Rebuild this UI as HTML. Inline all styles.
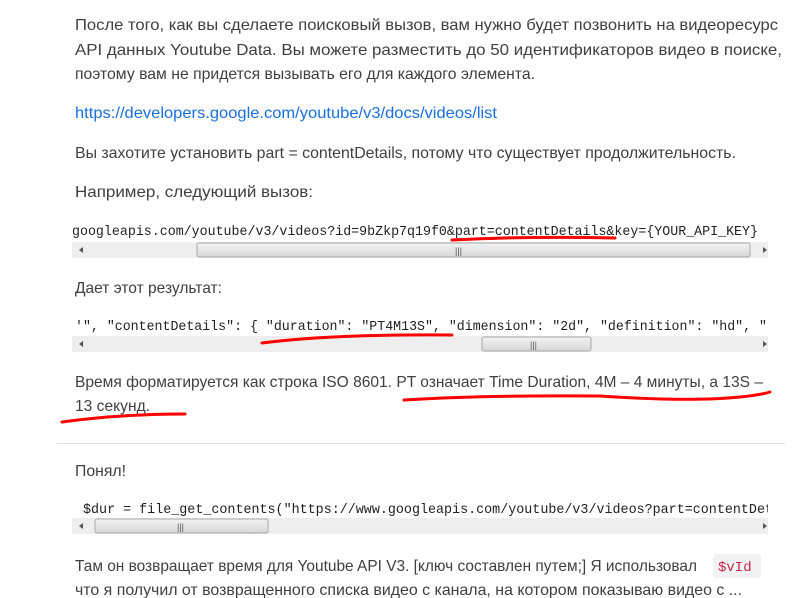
<!DOCTYPE html>
<html><head><meta charset="utf-8"><style>
html,body{margin:0;padding:0;background:#fff;width:808px;height:598px;overflow:hidden}
svg text{font-family:"Liberation Sans","DejaVu Sans",sans-serif;font-size:16px;fill:#404040}
svg text.m{font-family:"Liberation Mono","DejaVu Sans Mono",monospace;font-size:14px;fill:#222}
</style></head><body>
<svg width="808" height="598" xmlns="http://www.w3.org/2000/svg">
<defs>
<linearGradient id="th" x1="0" y1="0" x2="0" y2="1"><stop offset="0" stop-color="#f4f4f4"/><stop offset="1" stop-color="#d6d6d6"/></linearGradient>
</defs>
<text x="75" y="30" textLength="703" lengthAdjust="spacingAndGlyphs">После того, как вы сделаете поисковый вызов, вам нужно будет позвонить на видеоресурс</text>
<text x="75" y="55" textLength="707" lengthAdjust="spacingAndGlyphs">API данных Youtube Data. Вы можете разместить до 50 идентификаторов видео в поиске,</text>
<text x="75" y="79" textLength="460" lengthAdjust="spacingAndGlyphs">поэтому вам не придется вызывать его для каждого элемента.</text>
<text x="75" y="118" textLength="422" lengthAdjust="spacingAndGlyphs" style="fill:#1a6fe0">https://developers.google.com/youtube/v3/docs/videos/list</text>
<text x="75" y="158" textLength="661" lengthAdjust="spacingAndGlyphs">Вы захотите установить part = contentDetails, потому что существует продолжительность.</text>
<text x="75" y="197" textLength="238" lengthAdjust="spacingAndGlyphs">Например, следующий вызов:</text>

<text class="m" x="72" y="235" textLength="686" lengthAdjust="spacingAndGlyphs">googleapis.com/youtube/v3/videos?id=9bZkp7q19f0&amp;part=contentDetails&amp;key={YOUR_API_KEY}</text>
<rect x="72" y="242" width="696" height="16" fill="#eeeeee"/>
<rect x="197" y="243" width="553" height="14" rx="2" fill="url(#th)" stroke="#a8a8a8"/>
<text x="455" y="254" style="font-size:9px;fill:#555">|||</text>
<path d="M83 247l-4 3 4 3z" fill="#555"/><path d="M763 247l4 3-4 3z" fill="#555"/>

<text x="75" y="293" textLength="147" lengthAdjust="spacingAndGlyphs">Дает этот результат:</text>
<text class="m" x="75" y="330" textLength="692" lengthAdjust="spacingAndGlyphs">'", "contentDetails": { "duration": "PT4M13S", "dimension": "2d", "definition": "hd", "</text>
<rect x="72" y="336" width="696" height="16" fill="#eeeeee"/>
<rect x="482" y="337" width="109" height="14" rx="2" fill="url(#th)" stroke="#a8a8a8"/>
<text x="530" y="348" style="font-size:9px;fill:#555">|||</text>
<path d="M83 341l-4 3 4 3z" fill="#555"/><path d="M763 341l4 3-4 3z" fill="#555"/>

<text x="75" y="387" textLength="688" lengthAdjust="spacingAndGlyphs">Время форматируется как строка ISO 8601. PT означает Time Duration, 4M – 4 минуты, а 13S –</text>
<text x="75" y="411" textLength="75" lengthAdjust="spacingAndGlyphs">13 секунд.</text>

<rect x="57" y="443" width="728" height="1" fill="#e2e2e2"/>
<text x="75" y="476" textLength="51" lengthAdjust="spacingAndGlyphs">Понял!</text>
<text class="m" x="83" y="513" textLength="690" lengthAdjust="spacingAndGlyphs">$dur = file_get_contents("https://www.googleapis.com/youtube/v3/videos?part=contentDet</text>
<rect x="768" y="495" width="40" height="40" fill="#fff"/>
<rect x="72" y="518" width="696" height="16" fill="#eeeeee"/>
<rect x="95" y="519" width="173" height="14" rx="2" fill="url(#th)" stroke="#a8a8a8"/>
<text x="177" y="530" style="font-size:9px;fill:#555">|||</text>
<path d="M83 523l-4 3 4 3z" fill="#555"/><path d="M763 523l4 3-4 3z" fill="#555"/>

<text x="75" y="571" textLength="622" lengthAdjust="spacingAndGlyphs">Там он возвращает время для Youtube API V3. [ключ составлен путем;] Я использовал</text>
<rect x="713" y="554" width="48" height="24" rx="3" fill="#f2f2f2"/>
<text class="m" x="718" y="571" style="fill:#c7254e">$vId</text>
<text x="75" y="595" textLength="667" lengthAdjust="spacingAndGlyphs">что я получил от возвращенного списка видео с канала, на котором показываю видео с ...</text>

<g fill="none" stroke="#f00" stroke-width="3" stroke-linecap="round">
<path d="M452 240 Q530 236 615 238"/>
<path d="M262 343 Q330 334 452 335"/>
<path d="M404 400 Q480 395 600 396 Q690 402 740 397 Q760 395 770 392"/>
<path d="M62 422 Q120 414 185 414"/>
</g>
</svg>
</body></html>
